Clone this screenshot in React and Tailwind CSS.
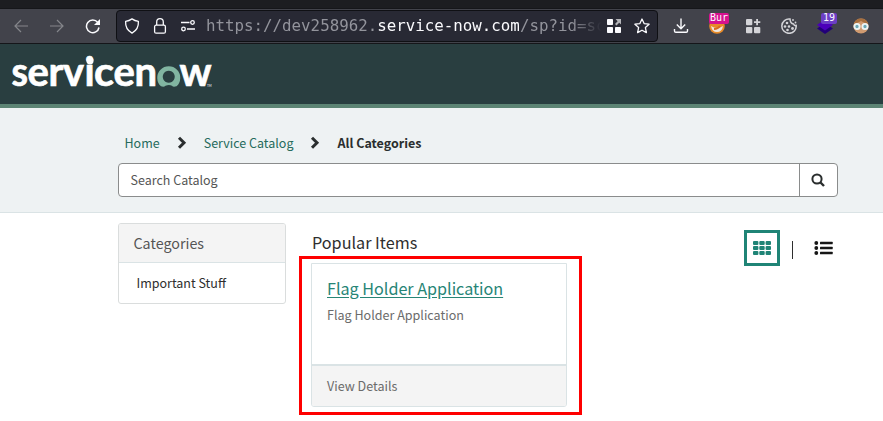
const sans = "font-['Noto_Sans_CJK_SC',sans-serif]";

function Toolbar() {
  return (
    <div className="border-y border-[#15161a] bg-[#42434b] h-9 flex items-center text-[#fbfbfe]">
      <svg className="ml-[14px] w-[14px] h-[14px] shrink-0 text-[#85868b]" viewBox="0 0 14 14" fill="none" stroke="currentColor" strokeWidth="1.2">
        <path d="M14 7H1M7 1 1 7l6 6" />
      </svg>
      <svg className="ml-[22px] w-[14px] h-[14px] shrink-0 text-[#85868b]" viewBox="0 0 14 14" fill="none" stroke="currentColor" strokeWidth="1.2">
        <path d="M0 7h13M7 1l6 6-6 6" />
      </svg>
      <svg className="ml-[21px] w-4 h-4 shrink-0" viewBox="0 0 16 16" fill="none" stroke="currentColor" strokeWidth="1.5">
        <path d="M14 9.500A6.300 6.300 0 1 1 12.700 4.400" />
        <path d="M15 1v6H9z" fill="currentColor" stroke="none" />
      </svg>
      <div className="ml-[15px] w-[542px] h-8 shrink-0 rounded-[4px] border border-[#0f1014] bg-[#282934] flex items-center">
        <svg className="ml-[7px] w-4 h-4 shrink-0" viewBox="0 0 16 16" fill="none" stroke="currentColor" strokeWidth="1.3">
          <path d="M8 .9c2 1.400 4 2.100 6.400 2.400.3 5.200-1.800 9.400-6.400 11.800C3.400 12.700 1.300 8.500 1.600 3.300 4 3 6 2.300 8 .9z" strokeLinejoin="round" />
        </svg>
        <svg className="ml-3 w-4 h-4 shrink-0" viewBox="0 0 16 16" fill="none" stroke="currentColor" strokeWidth="1.3">
          <rect x="2.600" y="7.200" width="10.800" height="8" rx="1.500" />
          <path d="M4.700 7V4a3.300 3.300 0 0 1 6.600 0v3" />
        </svg>
        <svg className="ml-3 w-4 h-4 shrink-0" viewBox="0 0 16 16" fill="none" stroke="currentColor" strokeWidth="1.300">
          <path d="M1 4.500h8.500M7 11h8" />
          <circle cx="12.500" cy="4.500" r="1.800" />
          <circle cx="3.500" cy="11" r="1.800" />
        </svg>
        <div className="ml-[10px] w-[396px] overflow-hidden whitespace-pre font-['DejaVu_Sans_Mono',monospace] text-[15.800px] leading-6 text-[#93949c] [mask-image:linear-gradient(to_right,black_92%,transparent)]">
          https://dev258962.<span className="text-[#fbfbfe]">service-now.com</span>/sp?id=sc
        </div>
        <svg className="ml-[5px] w-[14px] h-[14px] shrink-0" viewBox="0 0 14 14" fill="currentColor">
          <rect width="6" height="6" rx=".8" />
          <rect y="8" width="6" height="6" rx=".8" />
          <rect x="8" y="8" width="6" height="6" rx=".8" />
          <path d="M8.500 0H14v5.500l-1.800-1.800L9.500 6.500 8 5l2.600-2.800z" fill="#b4b5b9" />
        </svg>
        <svg className="ml-[13px] w-4 h-4 shrink-0" viewBox="0 0 16 16" fill="none" stroke="currentColor" strokeWidth="1.300" strokeLinejoin="round">
          <path d="m8 1 2.100 4.600 5 .6-3.700 3.400 1 5L8 12.200l-4.400 2.400 1-5L.9 6.200l5-.6z" />
        </svg>
      </div>
      <svg className="ml-[15px] w-4 h-4 shrink-0" viewBox="0 0 16 16" fill="none" stroke="currentColor" strokeWidth="1.400">
        <path d="M8 .5v10M3.800 6.500 8 10.700l4.200-4.200M1.500 11v2q0 1.300 1.300 1.300h10.400q1.300 0 1.300-1.300v-2" />
      </svg>
      <div className="relative ml-5 w-4 h-4 shrink-0">
        <svg className="w-4 h-4" viewBox="0 0 16 16">
          <circle cx="8" cy="8" r="7.800" fill="#e88b28" />
          <path d="M2 8q6 4 12 0-1 6-6 6T2 8z" fill="#eee7dc" />
          <path d="M5 11q4 0 6-3" stroke="#d66b20" strokeWidth="2" fill="none" />
        </svg>
        <span className="absolute left-0 top-[-5px] w-5 h-[11px] rounded-[2px] bg-[#d6128e] text-center font-['DejaVu_Sans_Mono',monospace] text-[10px] leading-[10px]">Bur</span>
      </div>
      <svg className="ml-5 w-4 h-4 shrink-0" viewBox="0 0 16 16" fill="#d4d4d8">
        <rect x="1" y="1" width="6.300" height="6.300" rx="1" />
        <rect x="1" y="9" width="6.300" height="6.300" rx="1" />
        <rect x="9" y="9" width="6.300" height="6.300" rx="1" />
        <path d="M11.200 1h1.800v2.200h2.300V5H13v2.300h-1.800V5H9V3.200h2.200z" />
      </svg>
      <svg className="ml-5 w-4 h-4 shrink-0" viewBox="0 0 16 16" fill="#d4d4d8">
        <path d="M9 1a7.200 7.200 0 1 0 6.200 6.500q-2 .6-2.700-1.500Q9.200 5.500 9 1z" fill="none" stroke="#d4d4d8" strokeWidth="1.500" />
        <circle cx="6" cy="5" r="1.300" /><circle cx="4" cy="8.500" r="1.300" /><circle cx="8" cy="8.500" r="1.300" />
        <circle cx="6.500" cy="12" r="1.300" /><circle cx="11.500" cy="10.500" r="1.400" />
        <circle cx="12" cy="2" r=".9" /><circle cx="14.500" cy="4.500" r=".9" />
      </svg>
      <div className="relative ml-5 w-4 h-4 shrink-0">
        <svg className="w-4 h-4" viewBox="0 0 16 16">
          <path d="M0 10.500 8 5l8 5.500L8 16z" fill="#220078" />
          <path d="M0 7 8 1l8 6-8 5.500z" fill="#4c00ba" />
        </svg>
        <span className="absolute left-1 top-[-5px] w-4 h-[11px] rounded-[2px] bg-[#6c3fc4] text-center font-['DejaVu_Sans_Mono',monospace] text-[10px] leading-[10px]">19</span>
      </div>
      <svg className="ml-5 w-4 h-4 shrink-0" viewBox="0 0 16 16">
        <circle cx="8" cy="8" r="7.600" fill="#d09a70" />
        <path d="M.8 6Q2 .4 8 .4T15.200 6Q11 5 8 3 5 5 .8 6z" fill="#a8703f" />
        <circle cx="4" cy="8.500" r="2.600" fill="#6aa7b5" stroke="#edf5f5" strokeWidth="1.900" />
        <circle cx="12" cy="8.500" r="2.600" fill="#6aa7b5" stroke="#edf5f5" strokeWidth="1.900" />
      </svg>
    </div>
  );
}

function Logo() {
  return (
    <svg className="ml-3 w-[200px] h-[34px] overflow-visible" viewBox="0 0 200 34" fill="white">
      <g className="font-['Lato',sans-serif] font-bold text-[40px]" stroke="white" strokeWidth=".7">
        <text x="-0.500" y="30.200" textLength="16.500" lengthAdjust="spacingAndGlyphs">s</text>
        <text x="15.500" y="30.200">e</text>
        <text x="36.500" y="30.200">r</text>
        <text x="51" y="30.200" textLength="21" lengthAdjust="spacingAndGlyphs">v</text>
        <text x="72.500" y="30.200">i</text>
        <text x="82" y="30.200" textLength="20" lengthAdjust="spacingAndGlyphs">c</text>
        <text x="101.500" y="30.200">e</text>
        <text x="122.500" y="30.200">n</text>
        <text x="167.500" y="30.200">w</text>
      </g>
      <circle cx="78" cy="4.800" r="3.600" />
      <path d="M149 30.300a11.500 11.500 0 1 1 15.500 0q-3.500 1-4.500-.5-3-1.600-6.500 0-1.500 1.500-4.500.5zM156.700 14.800a6 6 0 1 0 .1 0z" fill="#81b5a1" fillRule="evenodd" />
      <text x="195" y="30.500" className="font-['Lato',sans-serif] text-[3px]">TM</text>
    </svg>
  );
}

function Chevron({ className }) {
  return (
    <svg className={`w-[10px] h-[14px] ${className}`} viewBox="0 0 10 14" fill="none" stroke="#2a2e2e" strokeWidth="3">
      <path d="m2 1.800 5 5-5 5" />
    </svg>
  );
}

const cells = [0, 1, 2];

export default function App() {
  return (
    <div className={`w-[883px] h-[421px] overflow-hidden bg-white text-[#2e2e2e] ${sans}`}>
      <div className="h-2 bg-[#1c1d21]" />
      <Toolbar />
      <header className="h-16 border-b-4 border-[#5c8474] bg-[#293e40] flex items-start pt-[12px]">
        <Logo />
      </header>
      <section className="h-[105px] border-b border-[#dae3e5] bg-[#eef2f3] pl-[118px] pt-[25px]">
        <nav className="h-5 pl-[6.500px] flex items-center text-[12.500px] leading-5 whitespace-nowrap text-[#266b5c]">
          <a>Home</a>
          <Chevron className="ml-[17px]" />
          <a className="ml-[17px]">Service Catalog</a>
          <Chevron className="ml-[17px]" />
          <b className="ml-[17px] text-[#2a2e2e]">All Categories</b>
        </nav>
        <div className="mt-[10px] w-[720px] h-[34px] rounded-[4px] border border-[#8a8c8c] bg-white flex items-center">
          <span className="flex-1 pl-[11.500px] text-[12.500px] leading-5 text-[#555]">Search Catalog</span>
          <div className="w-[38px] h-full border-l border-[#8a8c8c] flex items-center justify-center pr-[2px]">
            <svg className="w-[14px] h-[14px]" viewBox="0 0 14 14" fill="none" stroke="#2a2e2e" strokeWidth="2">
              <circle cx="6" cy="6" r="4.600" /><path d="m9.500 9.500 3.500 3.500" strokeWidth="2.400" />
            </svg>
          </div>
        </div>
      </section>
      <main className="flex items-start pl-[118px]">
        <aside className="mt-[10px] w-[168px] h-[81px] rounded-[3px] border border-[#dadddd] overflow-hidden">
          <h2 className="h-[39px] border-b border-[#dae3e5] bg-[#f4f4f4] pl-[14.500px] text-[14.300px] leading-[37px] text-[#555]">Categories</h2>
          <div className="pl-[17.500px] text-[12.500px] leading-10">Important Stuff</div>
        </aside>
        <div className="ml-[13px] w-[283px]">
          <h2 className="h-[43px] pt-[17px] pl-[13px] text-[16.200px] leading-6">Popular Items</h2>
          <div className="h-[159px] border-[3px] border-[#fe0000] p-1 pl-[9px]">
            <article className="w-[256px] h-[144px] rounded-b-[3px] border border-[#dae3e5] overflow-hidden">
              <div className="h-[102px] border-b-2 border-[#dae3e5] pl-[15px] pt-[12px]">
                <h3 className="text-[16.150px] leading-6 text-[#278576] underline underline-offset-[2px]">Flag Holder Application</h3>
                <p className="mt-[5px] text-[12.550px] leading-5 text-[#6b6b6b]">Flag Holder Application</p>
              </div>
              <div className="h-10 bg-[#f4f4f4] pl-[15px] text-[12.550px] leading-10 text-[#6b6b6b]">View Details</div>
            </article>
          </div>
        </div>
        <div className="ml-[162px] mt-[17px] flex items-center">
          <div className="w-9 h-9 border-[3px] border-[#1f8476] flex items-center justify-center">
            <svg className="w-[18px] h-[14px]" viewBox="0 0 18 14" fill="#1f8476">
              {cells.map((r) => cells.map((c) => <rect key={`${r}${c}`} x={c * 6.300} y={r * 5} width="5.400" height="4" rx="1" />))}
            </svg>
          </div>
          <div className="ml-3 mt-1 w-px h-[18px] bg-[#2e2e2e]" />
          <svg className="ml-[21px] w-[19px] h-[14px]" viewBox="0 0 19 14" fill="#161616">
            {cells.map((r) => (
              <g key={r}><circle cx="2.300" cy={2 + r * 5} r="1.900" /><rect x="6" y={0.700 + r * 5} width="12.700" height="2.600" rx=".5" /></g>
            ))}
          </svg>
        </div>
      </main>
    </div>
  );
}
